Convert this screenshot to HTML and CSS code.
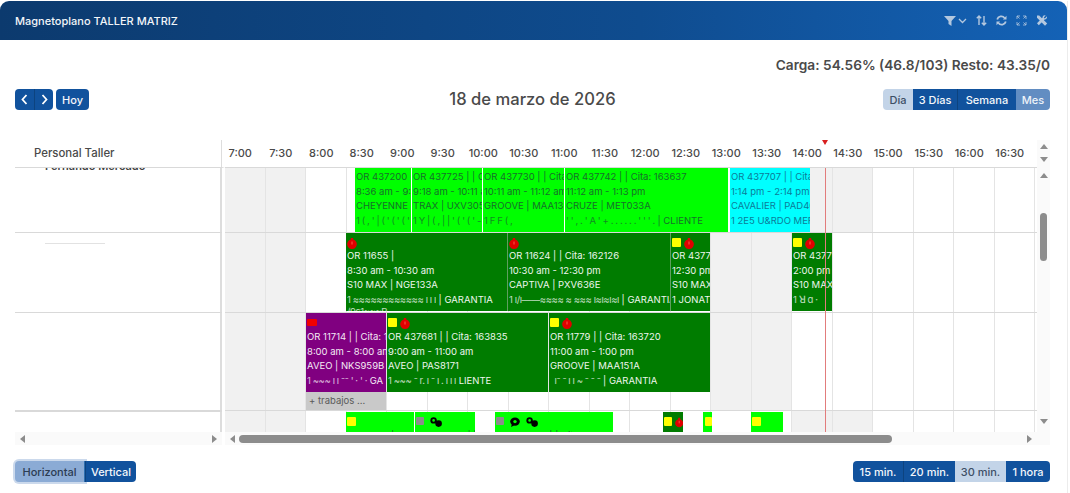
FILE: index.html
```html
<!DOCTYPE html>
<html lang="es">
<head>
  <meta charset="UTF-8">
  <title>Magnetoplano TALLER MATRIZ</title>
  <link rel="stylesheet" href="styles.css">
</head>
<body>

  <svg class="defs" width="0" height="0">
    <symbol id="drop" viewBox="0 0 10 11">
      <path d="M3.800 0h2.400v1.600a4.800 4.800 0 1 1-2.400 0z" fill="#e00000"/>
      <path d="M5 3.500v3" stroke="#ff5a4a" stroke-width="1"/>
    </symbol>
    <symbol id="bubble" viewBox="0 0 10 10">
      <ellipse cx="5" cy="4.600" rx="4.800" ry="4.200" fill="#000"/>
      <path d="M2 7l-1 3 3-1.500z" fill="#000"/>
      <circle cx="5" cy="4.600" r="1.700" fill="#00ff00"/>
    </symbol>
    <symbol id="pair" viewBox="0 0 12 10">
      <circle cx="3.600" cy="3.400" r="3.200" fill="#000"/>
      <circle cx="3.600" cy="3.400" r="1.300" fill="#00ff00"/>
      <circle cx="8.600" cy="6.600" r="3.300" fill="#000"/>
    </symbol>
  </svg>

  <div class="panel">
    <header class="panel-head">
      <span class="panel-title">Magnetoplano TALLER MATRIZ</span>
      <div class="panel-tools">
        <svg width="23" height="10" viewBox="0 0 23 10"><path d="M0 0h12L7.500 5v5l-3-2V5z" fill="currentColor"/><path d="M15 3l3.500 3.500L22 3" fill="none" stroke="currentColor" stroke-width="1.300"/></svg>
        <svg width="11" height="11" viewBox="0 0 11 11"><path d="M3 10V1M.8 3.200L3 1l2.200 2.200M8 1v9M5.800 7.800L8 10l2.200-2.200" fill="none" stroke="currentColor" stroke-width="1.400"/></svg>
        <svg width="11" height="11" viewBox="0 0 11 11"><path d="M1.200 4.500A4.200 4.200 0 0 1 8.600 3M9.800 6.500A4.200 4.200 0 0 1 2.400 8" fill="none" stroke="currentColor" stroke-width="1.800"/><path d="M10.500.8v3.600H6.900zM.5 10.200V6.600h3.600z" fill="currentColor"/></svg>
        <svg width="11" height="11" viewBox="0 0 11 11"><path d="M1 4V1h3M7 1h3v3M10 7v3H7M4 10H1V7M1 1l2.500 2.500M10 1L7.500 3.500M10 10L7.500 7.500M1 10l2.500-2.500" fill="none" stroke="currentColor" stroke-width=".8"/></svg>
        <svg width="12" height="11" viewBox="0 0 12 11"><path d="M1 .5l2.200 0 8 8-2.200 2.200-8-8z" fill="currentColor"/><path d="M11 1.200L8.800 3.400 7.800 2.600 9.600.4C8 0 6.600.8 6.600 2.400L1 8.200 2.800 10.300 8.600 4.500C10.200 4.600 11.400 3 11 1.200z" fill="currentColor"/></svg>
      </div>
    </header>

    <div class="content">
      <p class="load">Carga: 54.56% (46.8/103) Resto: 43.35/0</p>

      <div class="toolbar">
        <div class="btn-row">
          <div class="btn-group">
            <button class="btn nav-btn"><svg width="7" height="11" viewBox="0 0 7 11"><path d="M5.500 1L1.500 5.500l4 4.500" fill="none" stroke="#fff" stroke-width="1.800"/></svg></button>
            <button class="btn nav-btn"><svg width="7" height="11" viewBox="0 0 7 11"><path d="M1.500 1l4 4.500-4 4.500" fill="none" stroke="#fff" stroke-width="1.800"/></svg></button>
          </div>
          <button class="btn btn-solo">Hoy</button>
        </div>
        <h1 class="date-title">18 de marzo de 2026</h1>
        <div class="btn-group end">
          <button class="btn off w-dia">Día</button>
          <button class="btn w-3d">3 Días</button>
          <button class="btn w-sem">Semana</button>
          <button class="btn mid w-mes">Mes</button>
        </div>
      </div>

      <div class="scheduler">
        <div class="res-head">Personal Taller</div>
        <div class="time-head">
          <span>7:00</span><span>7:30</span><span>8:00</span><span>8:30</span><span>9:00</span><span>9:30</span><span>10:00</span><span>10:30</span><span>11:00</span><span>11:30</span><span>12:00</span><span>12:30</span><span>13:00</span><span>13:30</span><span>14:00</span><span>14:30</span><span>15:00</span><span>15:30</span><span>16:00</span><span>16:30</span>
          <i class="now-mark"></i>
        </div>
        <div class="head-scroll"><i class="arr up"></i><i class="arr down"></i></div>

        <div class="res-list">
          <div class="res-row r1"><span class="res-name">Fernando Mercado</span></div>
          <div class="res-row r2"><i class="smudge"></i></div>
          <div class="res-row r3"></div>
          <div class="res-row r4"></div>
        </div>

        <div class="grid">
          <div class="row r1">
            <div class="cells">
              <b class="off"></b><b class="off"></b><b></b><b></b><b></b><b></b><b></b><b></b><b></b><b></b><b></b><b></b><b></b><b></b><b class="off"></b><b class="off"></b><b></b><b></b><b></b><b></b>
            </div>
            <div class="ev lime" style="left:130px;width:56px"><p>OR 437200 | | Cita: 163</p><p>8:36 am - 9:18 am</p><p>CHEYENNE | PCS</p><p class="smear">1 ( , ' | ( ' ( ' ( ' ( '</p></div>
            <div class="ev lime" style="left:187px;width:70px"><p>OR 437725 | | Cita: 1</p><p>9:18 am - 10:11 am</p><p>TRAX | UXV305</p><p class="smear">1 Y | ( , | | ' ( ' ( ' -</p></div>
            <div class="ev lime" style="left:258px;width:81px"><p>OR 437730 | | Cita: 1636</p><p>10:11 am - 11:12 am</p><p>GROOVE | MAA13</p><p class="smear">1 F F ( ,</p></div>
            <div class="ev lime" style="left:340px;width:163px"><p>OR 437742 | | Cita: 163637</p><p>11:12 am - 1:13 pm</p><p>CRUZE | MET033A</p><p><span class="smear">' ' , . ' A ' + . . . . . . ' ' ' .</span> | CLIENTE</p></div>
            <div class="ev aqua" style="left:505px;width:80px"><p>OR 437707 | | Cita: 16</p><p>1:14 pm - 2:14 pm</p><p>CAVALIER | PAD404</p><p>1 2E5 U&amp;RDO MER</p></div>
          </div>

          <div class="row r2">
            <div class="cells">
              <b class="off"></b><b class="off"></b><b></b><b></b><b></b><b></b><b></b><b></b><b></b><b></b><b></b><b></b><b class="off"></b><b class="off"></b><b></b><b></b><b></b><b></b><b></b><b></b>
            </div>
            <div class="ev dark soft" style="left:121px;width:162px">
              <div class="marks"><svg class="drop"><use href="#drop"/></svg></div>
              <p>OR 11655 |</p><p>8:30 am - 10:30 am</p><p>S10 MAX | NGE133A</p><p><span class="smear">1 ≈≈≈≈≈≈≈≈≈≈≈≈ ı ı ı</span> | GARANTIA</p><p class="smear wrap-line">/9s1≈≈≈R</p>
            </div>
            <div class="ev dark soft" style="left:283px;width:163px">
              <div class="marks"><svg class="drop"><use href="#drop"/></svg></div>
              <p>OR 11624 | | Cita: 162126</p><p>10:30 am - 12:30 pm</p><p>CAPTIVA | PXV636E</p><p><span class="smear">1 ı/ı——≈≈≈≈ ≈ ≈≈≈ ı≈ı≈ı≈ı</span> | GARANTIA</p>
            </div>
            <div class="ev dark" style="left:446px;width:39px">
              <div class="marks"><i class="sq yellow"></i><svg class="drop"><use href="#drop"/></svg></div>
              <p>OR 43771</p><p>12:30 pm</p><p>S10 MAX</p><p>1 JONATHAN</p>
            </div>
            <div class="ev dark" style="left:567px;width:40px">
              <div class="marks"><i class="sq yellow"></i><svg class="drop"><use href="#drop"/></svg></div>
              <p>OR 43771</p><p>2:00 pm</p><p>S10 MAX</p><p class="smear">1 ꓤ ɑ ·</p>
            </div>
          </div>

          <div class="row r3">
            <div class="cells">
              <b class="off"></b><b class="off"></b><b></b><b></b><b></b><b></b><b></b><b></b><b></b><b></b><b></b><b></b><b class="off"></b><b class="off"></b><b></b><b></b><b></b><b></b><b></b><b></b>
            </div>
            <div class="ev purple" style="left:81px;width:80px">
              <div class="marks"><i class="sq red"></i></div>
              <p>OR 11714 | | Cita: 163</p><p>8:00 am - 8:00 am</p><p>AVEO | NKS959B</p><p><span class="smear">1 ~~~ ı ı ⁻⁻ ' · ' ·</span> GA</p>
            </div>
            <div class="more" style="left:81px;width:80px">+ trabajos ...</div>
            <div class="ev dark" style="left:162px;width:161px">
              <div class="marks"><i class="sq yellow"></i><svg class="drop"><use href="#drop"/></svg></div>
              <p>OR 437681 | | Cita: 163835</p><p>9:00 am - 11:00 am</p><p>AVEO | PAS8171</p><p><span class="smear">1 ~~~ ⁻ r. ı ⁻ ı . ı ı ı</span> LIENTE</p>
            </div>
            <div class="ev dark" style="left:324px;width:161px">
              <div class="marks"><i class="sq yellow"></i><svg class="drop"><use href="#drop"/></svg></div>
              <p>OR 11779 | | Cita: 163720</p><p>11:00 am - 1:00 pm</p><p>GROOVE | MAA151A</p><p><span class="smear">&nbsp; ı⁻ ⁻ ı ı ~ ⁻ ⁻ ⁻</span> | GARANTIA</p>
            </div>
          </div>

          <div class="row r4">
            <div class="cells">
              <b class="off"></b><b class="off"></b><b></b><b></b><b></b><b></b><b></b><b></b><b></b><b></b><b></b><b></b><b></b><b></b><b class="off"></b><b class="off"></b><b></b><b></b><b></b><b></b>
            </div>
            <div class="ev lime" style="left:121px;width:68px">
              <div class="marks"><i class="sq yellow"></i></div><p>OR 11568 |</p>
            </div>
            <div class="ev lime" style="left:190px;width:60px">
              <div class="marks"><i class="sq gray"></i><svg class="pair"><use href="#pair"/></svg></div><p>OR 437710 | |</p>
            </div>
            <div class="ev lime" style="left:270px;width:118px">
              <div class="marks"><i class="sq gray"></i><svg class="bubble"><use href="#bubble"/></svg><svg class="pair"><use href="#pair"/></svg></div><p>OR 437730 | | Cita: 163731</p>
            </div>
            <div class="ev dark" style="left:438px;width:20px">
              <div class="marks"><i class="sq yellow"></i><svg class="drop"><use href="#drop"/></svg></div><p>OR 43</p>
            </div>
            <div class="ev lime" style="left:478px;width:9px">
              <div class="marks"><i class="sq yellow tight"></i></div><p>OR</p>
            </div>
            <div class="ev lime" style="left:526px;width:32px">
              <div class="marks"><i class="sq yellow"></i></div><p>OR 437</p>
            </div>
          </div>

          <i class="now-line"></i>
        </div>

        <div class="vscroll"><i class="arr up"></i><i class="thumb-v"></i><i class="arr down"></i></div>

        <div class="hscroll left-bar"><i class="arr lft"></i><i class="arr rgt"></i></div>
        <div class="hscroll"><i class="arr lft"></i><i class="thumb-h"></i><i class="arr rgt"></i></div>
        <div class="corner"></div>
      </div>

      <div class="footer">
        <div class="btn-group open">
          <button class="btn mid pressed w-hor">Horizontal</button>
          <button class="btn w-ver">Vertical</button>
        </div>
        <div class="btn-group">
          <button class="btn w-15">15 min.</button>
          <button class="btn w-20">20 min.</button>
          <button class="btn off w-30">30 min.</button>
          <button class="btn w-1h">1 hora</button>
        </div>
      </div>
    </div>
  </div>

</body>
</html>
```

FILE: styles.css
```css
* {
  box-sizing: border-box;
}

html, body {
  height: 100%;
}

body {
  margin: 0;
  background: #fff;
  font-family: Inter, "Open Sans", sans-serif;
  color: #444;
  overflow: hidden;
}

p, h1 {
  margin: 0;
}

i {
  display: block;
}

.defs {
  position: absolute;
}

.panel {
  width: 1068px;
  height: 493px;
  border-right: 1px solid #ececec;
}

.panel-head {
  height: 39px;
  margin-top: 1px;
  padding: 0 19px 0 15px;
  display: flex;
  justify-content: space-between;
  align-items: center;
  background: linear-gradient(90deg, #0c3a6e, #0f4c8f 60%, #1462b6);
  border-radius: 9px 9px 0 0;
}

.panel-title {
  color: #f2f5f9;
  font-size: 11px;
  font-weight: 500;
}

.panel-tools {
  display: flex;
  align-items: center;
  gap: 9px;
  color: #b4c8df;
}

.content {
  padding: 15px 17px 0 15px;
}

.load {
  height: 20px;
  line-height: 20px;
  text-align: right;
  font-size: 13.7px;
  font-weight: 600;
  color: #4a4a4a;
}

.toolbar {
  margin-top: 14px;
  height: 21px;
  display: grid;
  grid-template-columns: 1fr auto 1fr;
  align-items: center;
}

.date-title {
  margin-top: -2px;
  font-size: 16.6px;
  font-weight: 500;
  color: #4a4a4a;
}

.btn-row {
  display: flex;
  gap: 3px;
}

.btn-group {
  display: flex;
  height: 21px;
  border-radius: 4px;
  overflow: hidden;
}

.btn-group.end {
  justify-self: end;
}

.btn-group.open {
  overflow: visible;
}

.btn {
  height: 21px;
  padding: 0;
  border: none;
  background: #11529d;
  color: #f4f7fb;
  font-family: inherit;
  font-size: 11px;
  font-weight: 500;
}

.btn + .btn {
  border-left: 1px solid #0d437f;
}

.btn.off {
  background: #c3d4e8;
  color: #3d4f66;
  border-left: none;
}

.btn.off + .btn {
  border-left: none;
}

.btn.mid {
  background: #628dc2;
  color: #eef3f9;
  border-left: none;
}

.nav-btn {
  width: 19px;
  display: flex;
  align-items: center;
  justify-content: center;
}

.btn-solo {
  width: 33px;
  border-radius: 4px;
}

.w-dia { width: 30px; }
.w-3d { width: 44px; }
.w-sem { width: 59px; }
.w-mes { width: 34px; }
.w-hor { width: 70px; }
.w-ver { width: 51px; }
.w-15 { width: 50px; }
.w-20 { width: 52px; }
.w-30 { width: 51px; }
.w-1h { width: 44px; }

.btn.pressed {
  background: #8babd5;
  color: #2c3c52;
  border-right: 1px solid #2f6fb0;
  border-radius: 4px 0 0 4px;
  box-shadow: 0 0 0 2px rgba(139, 171, 213, .45);
}

.w-ver {
  border-radius: 0 4px 4px 0;
}

/* scheduler */
.scheduler {
  margin-top: 30px;
  display: grid;
  grid-template-columns: 210px 812px 13px;
  grid-template-rows: 28px 264px 13px;
}

.res-head {
  padding-left: 19px;
  line-height: 27px;
  font-size: 11.4px;
  font-weight: 500;
  color: #4a4a4a;
  border-bottom: 1px solid #d9d9d9;
  border-right: 3px solid #fff;
  box-shadow: inset -1px 0 0 #ddd;
}

.time-head {
  position: relative;
  display: flex;
  border-bottom: 1px solid #d9d9d9;
}

.time-head span {
  flex: 0 0 40.5px;
  padding-right: 10px;
  text-align: center;
  line-height: 27px;
  font-size: 11px;
  font-weight: 500;
  color: #4a4a4a;
  white-space: nowrap;
}

.now-mark {
  position: absolute;
  left: 597px;
  top: 0;
  border-left: 3.5px solid transparent;
  border-right: 3.5px solid transparent;
  border-top: 5px solid #d81f1f;
}

.head-scroll {
  background: #fafafa;
  display: flex;
  flex-direction: column;
  align-items: center;
  gap: 8px;
  padding-top: 4px;
}

.res-list {
  height: 264px;
  overflow: hidden;
  border-right: 3px solid #fff;
  box-shadow: inset -1px 0 0 #ddd, inset -2px 0 0 #ddd;
}

.res-row {
  border-bottom: 1px solid #d9d9d9;
  padding-left: 30px;
  overflow: hidden;
}

.res-row.r1 { height: 65px; }
.res-row.r2 { height: 80px; padding-top: 10px; }
.res-row.r3 { height: 98px; }

.res-name {
  display: block;
  margin-top: -9px;
  line-height: 14px;
  font-size: 11px;
  font-weight: 600;
  color: #444;
}

.smudge {
  width: 60px;
  height: 1px;
  background: #e2e2e2;
}

.grid {
  position: relative;
  height: 264px;
  overflow: hidden;
}

.row {
  position: relative;
  overflow: hidden;
  border-bottom: 1px solid #d9d9d9;
}

.row.r1 { height: 65px; }
.row.r2 { height: 80px; }
.row.r3 { height: 98px; }
.row.r4 { height: 21px; border-bottom: none; }

.cells {
  display: flex;
  height: 100%;
}

.cells b {
  flex: 0 0 40.5px;
  border-right: 1px solid #e4e4e4;
}

.cells b.off {
  background: #f1f1f1;
}

.ev {
  position: absolute;
  top: 0;
  bottom: 0;
  padding: 1px 0 0 1px;
  overflow: hidden;
  white-space: nowrap;
  font-size: 9.5px;
  line-height: 14.7px;
}

.row.r1 .ev {
  padding-top: 2px;
}

.row.r2 .ev {
  bottom: 1px;
  padding-top: 0;
}

.row.r2 .marks {
  padding-top: 5px;
}

.row.r3 .ev {
  bottom: 18px;
}

.row.r4 .ev {
  top: 1px;
  bottom: 0;
}

.wrap-line {
  margin-top: -3px;
}

.lime {
  background: #00ff00;
  color: #17702a;
}

.aqua {
  background: #00ffff;
  color: #0c7c98;
}

.dark {
  background: #007c00;
  color: #eef6ee;
}

.purple {
  background: #800080;
  color: #f4e9f4;
}

.soft {
  border-right: 1px solid #5f9f5f;
}

.smear {
  opacity: .8;
  letter-spacing: -.4px;
}

.marks {
  height: 16px;
  padding-top: 4px;
  display: flex;
  align-items: flex-start;
  gap: 3px;
}

.sq {
  width: 9px;
  height: 9px;
  border-radius: 1px;
}

.sq.tight {
  margin-left: 1px;
}

.yellow { background: #ffff00; }
.gray { background: #8c8c8c; width: 8px; height: 8px; }
.red { background: #f00000; width: 10px; height: 7px; margin-top: 1px; }

.drop {
  width: 10px;
  height: 11px;
}

.bubble {
  width: 10px;
  height: 10px;
  margin-left: 3px;
}

.pair {
  width: 12px;
  height: 10px;
  margin-left: 3px;
}

.more {
  position: absolute;
  top: 79px;
  height: 18px;
  padding-left: 3px;
  background: #c9c9c9;
  color: #5a5a5a;
  font-size: 9.5px;
  line-height: 17px;
  white-space: nowrap;
}

.now-line {
  position: absolute;
  left: 600px;
  top: 0;
  bottom: 0;
  width: 1px;
  background: #e27c7c;
}

.vscroll {
  background: #fafafa;
  height: 264px;
  display: flex;
  flex-direction: column;
  align-items: center;
  padding-top: 5px;
}

.thumb-v {
  width: 7px;
  height: 48px;
  margin-top: 35px;
  margin-bottom: 158px;
  border-radius: 4px;
  background: #8c8c8c;
}

.hscroll {
  background: #fafafa;
  display: flex;
  align-items: center;
  justify-content: space-between;
  padding: 0 5px;
}

.hscroll.left-bar {
  border-right: 3px solid #fff;
}

.thumb-h {
  width: 653px;
  height: 8px;
  margin-left: 4px;
  margin-right: auto;
  border-radius: 4px;
  background: #8c8c8c;
}

.corner {
  background: #fafafa;
}

.arr {
  width: 0;
  height: 0;
  flex: none;
}

.arr.up {
  border-left: 4px solid transparent;
  border-right: 4px solid transparent;
  border-bottom: 5px solid #8c8c8c;
}

.arr.down {
  border-left: 4px solid transparent;
  border-right: 4px solid transparent;
  border-top: 5px solid #8c8c8c;
}

.arr.lft {
  border-top: 4px solid transparent;
  border-bottom: 4px solid transparent;
  border-right: 5px solid #8c8c8c;
}

.arr.rgt {
  border-top: 4px solid transparent;
  border-bottom: 4px solid transparent;
  border-left: 5px solid #8c8c8c;
}

.footer {
  margin-top: 16px;
  display: flex;
  justify-content: space-between;
}
```
